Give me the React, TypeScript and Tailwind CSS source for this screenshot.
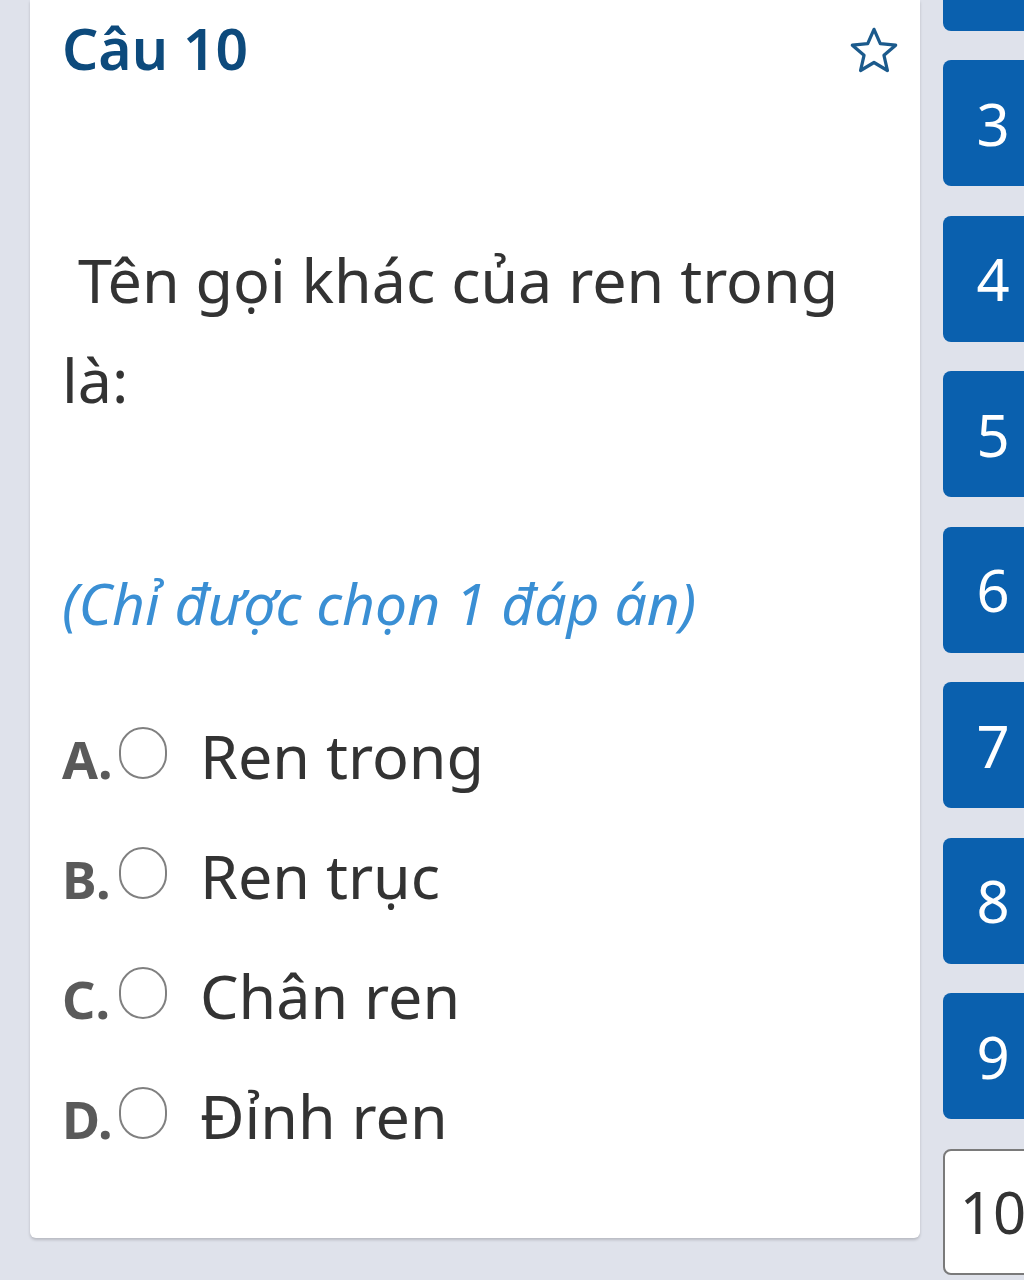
import React from "react";

function StarIcon() {
  return (
    <svg width="52" height="52" viewBox="0 0 24 24" fill="none" stroke="#1b5a8c" strokeWidth="1.5" strokeLinejoin="round">
      <polygon points="12,2 14.9,8.6 22,9.3 16.6,14 18.2,21 12,17.3 5.8,21 7.4,14 2,9.3 9.1,8.6" />
    </svg>
  );
}

const options = [
  { k: "A.", t: "Ren trong" },
  { k: "B.", t: "Ren trục" },
  { k: "C.", t: "Chân ren" },
  { k: "D.", t: "Đỉnh ren" },
];

const nums = [3, 4, 5, 6, 7, 8, 9];

export default function App() {
  return (
    <div className="w-[1024px] h-[1280px] overflow-hidden bg-[#dfe2eb] flex items-start pl-[30px] font-['Noto_Sans','Open_Sans',sans-serif]">
      <div className="w-[890px] h-[1238px] shrink-0 bg-white rounded-b-md shadow-[0_2px_3px_rgba(0,0,0,0.18)] pl-[32px] pr-[20px]">
        <div className="flex justify-between items-start pt-[18px]">
          <h2 className="text-[57px] leading-[60px] font-semibold text-[#0d4a7c]">Câu 10</h2>
          <div className="mt-[7px]">
            <StarIcon />
          </div>
        </div>
        <p className="mt-[152px] text-[61px] leading-[100px] text-[#333333]">
          {"\u00a0"}Tên gọi khác của ren trong là:
        </p>
        <p className="mt-[123px] text-[57px] leading-[100px] italic text-[#3a8fd4]">
          (Chỉ được chọn 1 đáp án)
        </p>
        <div className="mt-[43px] flex flex-col">
          {options.map((o) => (
            <div key={o.k} className="flex items-baseline h-[120px] leading-[120px]">
              <span className="w-[57px] shrink-0 text-[52px] font-bold text-[#5a5a5a]">{o.k}</span>
              <span className="inline-block w-[48px] h-[52px] shrink-0 rounded-full border-2 border-[#808080] mb-[11px]"></span>
              <span className="ml-[33px] text-[61px] text-[#333333]">{o.t}</span>
            </div>
          ))}
        </div>
      </div>
      <div className="ml-[23px] shrink-0 flex flex-col gap-[29.5px] -mt-[95.5px]">
        <div className="w-[100px] h-[126px] rounded-lg bg-[#0a60ae]"></div>
        {nums.map((n) => (
          <div
            key={n}
            className="w-[100px] h-[126px] rounded-lg bg-[#0a60ae] text-white text-[58px] flex items-center justify-center"
          >
            {n}
          </div>
        ))}
        <div className="w-[100px] h-[126px] rounded-lg bg-white border-2 border-[#7a7a7a] text-[#333333] text-[58px] flex items-center justify-center">
          10
        </div>
      </div>
    </div>
  );
}
